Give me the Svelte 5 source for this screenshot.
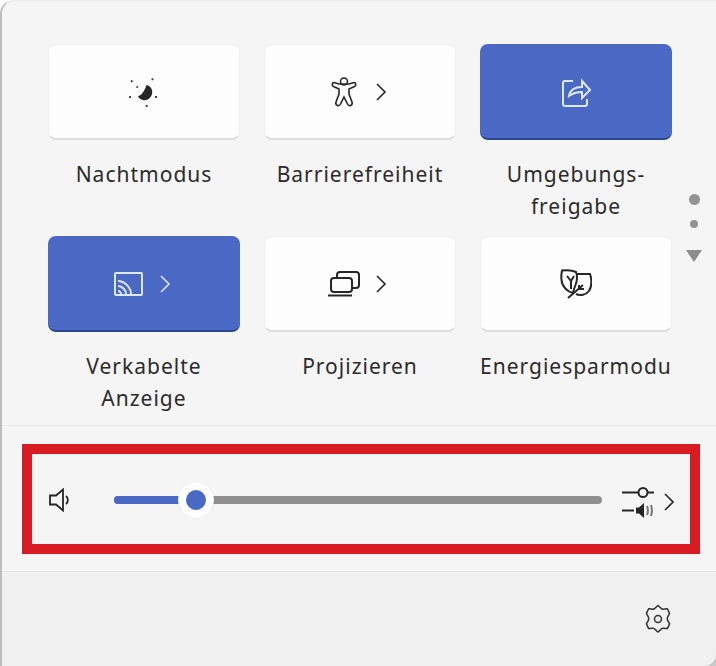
<script>
	const tiles = [
		{ label: 'Nachtmodus', icon: 'night' },
		{ label: 'Barrierefreiheit', icon: 'person', more: true },
		{ label: 'Umgebungs-\nfreigabe', icon: 'share', active: true },
		{ label: 'Verkabelte\nAnzeige', icon: 'cast', active: true, more: true },
		{ label: 'Projizieren', icon: 'project', more: true },
		{ label: 'Energiesparmodus', icon: 'leaf' }
	];

	let volume = $state(13.5);
</script>

<div class="panel">
	<section class="tiles-area">
		<div class="grid">
			{#each tiles as tile}
				<div class="cell">
					<div class="tile" class:active={tile.active}>
						<svg class="icon" viewBox="0 0 32 32" aria-hidden="true">
							{#if tile.icon === 'night'}
								<path class="solid" d="M18.500 9C23 10 25 14 24 18C23 22 19 25 15 24C12.500 23.500 10.500 22 10 20C13.500 19.500 16.500 15 18.500 9z" />
								<path class="ray" d="M3 4.500l1.500 1.200M25 2.500l-1 1.500M1 21h2M27 21h2M18.700 29v2M8.500 10.500l1.500 1" />
							{:else if tile.icon === 'person'}
								<circle class="line thin" cx="16" cy="5.500" r="3.500" />
								<path class="line thin" d="M11 8L6 6.500C4 6.500 3.500 9.500 5.500 10.500L11 13V18L8 26C7 29.500 11 31 12.500 28L16 21L19.500 28C21 31 25 29.500 24 26L21 18V13L26.500 10.500C28.500 9.500 28 6.500 26 6.500L21 8z" />
							{:else if tile.icon === 'share'}
								<path class="line" d="M13 5H5a2 2 0 0 0-2 2v21a2 2 0 0 0 2 2h20a2 2 0 0 0 2-2v-5" />
								<path class="line" d="M9 20c1-6 6-9 13-9V5l8 9l-8 8v-6c-5 0-9 1-13 4z" />
							{:else if tile.icon === 'cast'}
								<rect class="line" x="3" y="5" width="27" height="22" rx="1" />
								<path class="line" d="M6 13c6 0 13 6 13 13M6 18c4 0 8 4 8 8M6 23c1.500 0 3 1.500 3 3" />
							{:else if tile.icon === 'project'}
								<rect class="line" x="9" y="4" width="22" height="16" rx="3" />
								<rect class="line fill-white" x="3" y="10" width="21" height="14" rx="3" />
								<path class="line" d="M0 27.500h24" />
							{:else if tile.icon === 'leaf'}
								<path class="line" d="M17 6h13c2 6 2 12-1 17c-3 4-9 5-13 3" />
								<path class="line" d="M2 2.500C6 2 12 2 16 4C17.500 8 17.500 12 15.500 17C14 21 13 24 13 25C8 24 2 19 1.500 12C1 8 1.500 5 2 2.500z" />
								<path class="line" d="M8 30L23 17M7 8l4 5l3-5M11 13v8M19 21h5M19 21v-4" />
							{/if}
						</svg>
						{#if tile.more}
							<svg class="chevron" viewBox="0 0 16 18" aria-hidden="true">
								<path d="M1 1l8 8l-8 8" />
							</svg>
						{/if}
					</div>
					<div class="label">{tile.label}</div>
				</div>
			{/each}
		</div>
		<div class="pager" aria-hidden="true">
			<span class="dot big"></span>
			<span class="dot"></span>
			<span class="arrow"></span>
		</div>
	</section>

	<section class="volume-area">
		<div class="volume">
			<svg class="speaker" viewBox="0 0 24 24" aria-hidden="true">
				<path d="M1 7.500h6l7-6v21l-7-6H1z" />
				<path d="M17 8c2.500 2 2.500 6 0 8" />
			</svg>
			<div class="slider">
				<div class="fill" style="width: {volume}%"></div>
				<div class="thumb" style="left: {volume + 3.300}%"></div>
			</div>
			<button class="mixer" aria-label="Lautstärkemixer">
				<svg viewBox="0 0 34 36" aria-hidden="true">
					<path class="line" d="M0 10.500h16M26 10.500h6M0 28.500h12" />
					<circle class="line" cx="21" cy="10.500" r="4.500" />
					<path class="solid" d="M14 25.500h3l5-4.500v15l-5-4.500h-3z" />
					<path class="line grey" d="M25 24c1 2.500 1 6.500 0 9M29 23c1 3 1 8 0 11" />
				</svg>
				<svg class="chevron" viewBox="0 0 10 18">
					<path d="M1 1l8 8l-8 8" />
				</svg>
			</button>
		</div>
	</section>

	<footer class="footer">
		<svg class="gear" viewBox="0 0 28 30" aria-hidden="true">
			<path d="M14 1.500l4 3.500c1.500.5 3.500 0 5.200-.3c1 1.500 1.800 3.200 2.300 5l-2 3.500c-.2 1-.2 2 0 3l2 3.500c-.5 1.800-1.300 3.500-2.300 5c-1.700-.3-3.700-.8-5.200-.3l-4 3.600l-4-3.600c-1.500-.5-3.500 0-5.200 .3c-1-1.500-1.800-3.200-2.300-5l2-3.500c.2-1 .2-2 0-3l-2-3.500c.5-1.800 1.300-3.500 2.300-5c1.700 .3 3.700 .8 5.200 .3z" />
			<circle cx="14" cy="15" r="3.500" />
		</svg>
	</footer>
</div>

<style>
	:global(body) {
		background: #fff;
	}

	.panel {
		box-sizing: border-box;
		width: 716px;
		height: 666px;
		display: flex;
		flex-direction: column;
		border-left: 2px solid #bdbdbd;
		border-top: 1px solid #ececec;
		border-top-left-radius: 14px;
		overflow: hidden;
		background: #c9c9c9;
		font-family: 'Noto Sans', 'Open Sans', sans-serif;
		color: #2b2b2b;
	}

	.tiles-area {
		height: 425px;
		flex: none;
		display: flex;
		padding: 43px 0 0 46px;
		box-sizing: border-box;
		overflow: hidden;
		background: #f5f5f5;
		border-bottom: 1px solid #e6e6e6;
	}

	.grid {
		display: grid;
		grid-template-columns: repeat(3, 192px);
		grid-auto-rows: 192px;
		column-gap: 24px;
		flex: none;
	}

	.tile {
		box-sizing: border-box;
		height: 96px;
		padding-top: 1px;
		display: flex;
		align-items: center;
		justify-content: center;
		gap: 16px;
		background: #fdfdfd;
		border: 1px solid #efefef;
		border-bottom: 2px solid #dedede;
		border-radius: 8px;
		color: #262626;
	}

	.tile.active {
		padding-top: 2px;
		background: #4a69c4;
		border: none;
		border-bottom: 2px solid #2c468f;
		color: #dfe7fa;
	}

	.icon {
		width: 32px;
		height: 32px;
		flex: none;
	}

	.line {
		fill: none;
		stroke: currentColor;
		stroke-width: 2;
	}

	.thin {
		stroke-width: 1.600;
	}

	.fill-white {
		fill: #fdfdfd;
	}

	.solid {
		fill: currentColor;
	}

	.ray {
		fill: none;
		stroke: #444;
		stroke-width: 2;
	}

	.chevron {
		width: 16px;
		height: 18px;
		flex: none;
		fill: none;
		stroke: currentColor;
		stroke-width: 1.600;
	}

	.label {
		margin-top: 18px;
		width: 192px;
		height: 64px;
		overflow: hidden;
		text-align: center;
		white-space: pre-line;
		font-size: 21px;
		line-height: 32px;
		letter-spacing: 1px;
	}

	.pager {
		display: flex;
		flex-direction: column;
		align-items: center;
		width: 14px;
		margin-left: 15px;
		padding-top: 150px;
		gap: 15px;
	}

	.dot {
		width: 8px;
		height: 8px;
		border-radius: 50%;
		background: #939393;
	}

	.dot.big {
		width: 11px;
		height: 11px;
	}

	.arrow {
		margin-top: 7px;
		border-left: 8px solid transparent;
		border-right: 8px solid transparent;
		border-top: 12px solid #8c8c8c;
	}

	.volume-area {
		flex: none;
		height: 146px;
		padding: 18px 16px 0 20px;
		box-sizing: border-box;
		background: #f5f5f5;
		border-bottom: 1px solid #e2e2e2;
	}

	.volume {
		box-sizing: border-box;
		width: 678px;
		height: 110px;
		border: 10px solid #d91c24;
		display: flex;
		align-items: center;
		padding: 2px 0 0 17px;
	}

	.speaker {
		width: 24px;
		height: 24px;
		flex: none;
		fill: none;
		stroke: #262626;
		stroke-width: 1.800;
	}

	.slider {
		position: relative;
		margin-left: 41px;
		width: 488px;
		height: 8px;
		flex: none;
		background: #8f8f8f;
		border-radius: 4px;
	}

	.fill {
		height: 100%;
		background: #4a69c4;
		border-radius: 4px 0 0 4px;
	}

	.thumb {
		position: absolute;
		top: 50%;
		width: 20px;
		height: 20px;
		border-radius: 50%;
		background: #4a69c4;
		border: 8px solid #fdfdfd;
		box-sizing: content-box;
		transform: translate(-50%, -50%);
		box-shadow: 0 0 1px rgba(0, 0, 0, 0.15);
	}

	.mixer {
		display: flex;
		align-items: center;
		gap: 8px;
		margin-left: 20px;
		padding: 0;
		border: none;
		background: none;
		color: #262626;
	}

	.mixer > svg:first-child {
		width: 34px;
		height: 36px;
		flex: none;
	}

	.mixer .chevron {
		width: 10px;
		margin-top: 4px;
	}

	.grey {
		stroke: #777;
	}

	.footer {
		flex: 1;
		display: flex;
		align-items: flex-start;
		justify-content: flex-end;
		padding: 32px 44px 0 0;
		background: #f0f0f0;
		border-bottom-right-radius: 12px;
	}

	.gear {
		width: 28px;
		height: 30px;
		fill: none;
		stroke: #333;
		stroke-width: 1.500;
	}
</style>
